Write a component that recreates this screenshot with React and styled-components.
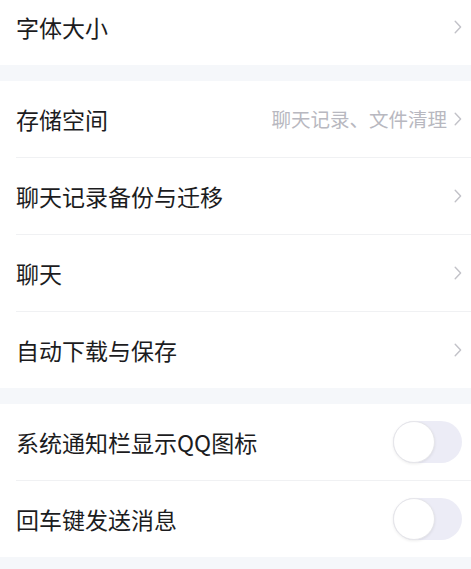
import React from "react";
import styled, { createGlobalStyle } from "styled-components";

const GlobalStyle = createGlobalStyle`
  html, body {
    margin: 0;
    padding: 0;
    background: #f5f7fa;
  }
  body {
    font-family: "Noto Sans CJK SC", "Noto Sans", sans-serif;
    overflow: hidden;
  }
`;

const groups = [
  [{ id: "font", label: "字体大小", type: "link" }],
  [
    { id: "storage", label: "存储空间", type: "link", hint: "聊天记录、文件清理" },
    { id: "backup", label: "聊天记录备份与迁移", type: "link" },
    { id: "chat", label: "聊天", type: "link" },
    { id: "download", label: "自动下载与保存", type: "link" },
  ],
  [
    { id: "notify", label: "系统通知栏显示QQ图标", type: "toggle" },
    { id: "enter", label: "回车键发送消息", type: "toggle" },
  ],
];

const Chevron = () => (
  <ChevronIcon viewBox="0 0 8 14" width="8" height="14">
    <polyline
      points="1.2,1.2 6.6,7 1.2,12.8"
      fill="none"
      stroke="currentColor"
      strokeWidth="1.4"
      strokeLinecap="round"
      strokeLinejoin="round"
    />
  </ChevronIcon>
);

const Settings = () => {
  return (
    <Page>
      <GlobalStyle />
      {groups.map((group, i) => (
        <Group key={i} $first={i === 0}>
          {group.map((item) => (
            <Row key={item.id}>
              <Label>{item.label}</Label>
              <Trailing>
                {item.hint && <Hint>{item.hint}</Hint>}
                {item.type === "link" ? (
                  <Chevron />
                ) : (
                  <Switch>
                    <Knob />
                  </Switch>
                )}
              </Trailing>
            </Row>
          ))}
        </Group>
      ))}
    </Page>
  );
};

const Page = styled.div`
  display: flex;
  flex-direction: column;
  gap: 16px;
  width: 471px;
  min-height: 569px;
  background: #f5f7fa;
`;

const Group = styled.section`
  background: #fff;
  margin-top: ${(p) => (p.$first ? "-11px" : "0")};
  padding-left: 16px;
`;

const Row = styled.div`
  display: flex;
  align-items: center;
  justify-content: space-between;
  height: 76px;
  padding-right: 9px;
  box-sizing: border-box;

  & + & {
    border-top: 1px solid #f0f1f3;
    height: 77px;
  }
`;

const Label = styled.span`
  font-size: 23px;
  line-height: 1;
  color: #1c1c1e;
`;

const Trailing = styled.div`
  display: flex;
  align-items: center;
  gap: 7px;
`;

const Hint = styled.span`
  font-size: 19.5px;
  line-height: 1;
  color: #b8b8c0;
`;

const ChevronIcon = styled.svg`
  display: block;
  color: #c2c2c8;
`;

const Switch = styled.div`
  width: 69px;
  height: 42px;
  border-radius: 21px;
  background: #ececf6;
  display: flex;
  align-items: center;
`;

const Knob = styled.div`
  width: 40px;
  height: 40px;
  border-radius: 50%;
  background: #fff;
  border: 1px solid #e6e6ea;
  box-shadow: 0 1px 3px rgba(0, 0, 0, 0.08);
`;

export default Settings;
